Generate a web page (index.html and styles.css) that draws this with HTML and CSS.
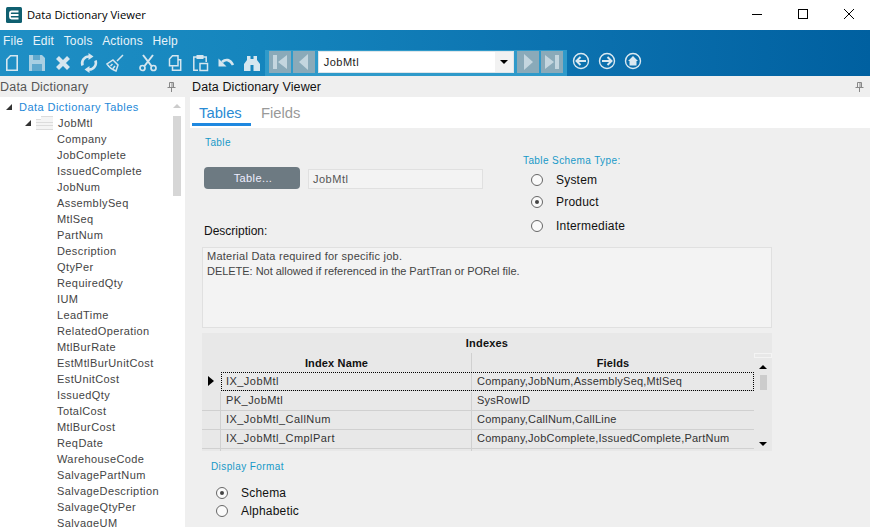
FILE: index.html
```html
<!DOCTYPE html>
<html lang="en">
<head>
<meta charset="utf-8">
<title>Data Dictionary Viewer</title>
<link rel="stylesheet" href="styles.css">
</head>
<body>
<div class="app">
  <header class="titlebar">
    <svg class="logo" width="16" height="16" viewBox="0 0 16 16"><rect width="16" height="16" rx="1.500" fill="#0f5f70"/><path d="M12.500 8H4V6a1.500 1.500 0 0 1 1.500-1.500h7M4 8v2a1.500 1.500 0 0 0 1.500 1.500h7" fill="none" stroke="#fff" stroke-width="1.800"/></svg>
    <span class="title">Data Dictionary Viewer</span>
    <div class="winctl">
      <svg width="46" height="20" viewBox="0 0 46 20"><path d="M18 10.500h10" stroke="#000"/></svg>
      <svg width="46" height="20" viewBox="0 0 46 20"><rect x="18.500" y="5.500" width="9" height="9" fill="none" stroke="#000"/></svg>
      <svg width="46" height="20" viewBox="0 0 46 20"><path d="M18 5l10 10M28 5L18 15" stroke="#000"/></svg>
    </div>
  </header>
  <div class="ribbon">
    <nav class="menu"><span>File</span><span>Edit</span><span>Tools</span><span>Actions</span><span>Help</span></nav>
    <div class="toolbar">
      <div class="tools">
        <svg class="tool" viewBox="0 0 20 20"><path d="M8.500 2.800h6.700v14.400H4.800V6.500z" fill="none" stroke="currentColor" stroke-width="1.600"/></svg>
        <svg class="tool" viewBox="0 0 20 20"><path d="M2 2h13l3 3v13H2z" fill="#a9cfe2"/><path d="M6 2h7v5H6zM5 11h10v7H5z" fill="#5fa8cd"/></svg>
        <svg class="tool" viewBox="0 0 20 20"><path d="M4.500 4.500l11 11M15.500 4.500l-11 11" stroke="currentColor" stroke-width="4.200"/></svg>
        <svg class="tool" viewBox="0 0 20 20"><path d="M3.500 12.500a6.800 6.800 0 0 1 6.500-9M16.500 7.500a6.800 6.800 0 0 1-6.500 9" fill="none" stroke="currentColor" stroke-width="2.600"/><path d="M9.500 0l5 3.500-5 3.500zM10.500 20l-5-3.500 5-3.500z" fill="currentColor"/></svg>
        <svg class="tool" viewBox="0 0 20 20"><path d="M18 2l-6 6M8 7l5 5-2 6c-3-1-7-4-9-7zM5.500 13l2-2M8 15.500l2-2.500" fill="none" stroke="currentColor" stroke-width="1.500"/></svg>
        <span class="tool-gap"></span>
        <svg class="tool" viewBox="0 0 20 20"><circle cx="4.500" cy="15" r="2.500" fill="none" stroke="currentColor" stroke-width="1.700"/><circle cx="15.500" cy="15" r="2.500" fill="none" stroke="currentColor" stroke-width="1.700"/><path d="M6.500 13L15 2M13.500 13L5 2" stroke="currentColor" stroke-width="2"/></svg>
        <svg class="tool" viewBox="0 0 20 20"><path d="M8.500 2.800h5.500v10H5.500V6z" fill="none" stroke="currentColor" stroke-width="1.500"/><path d="M14 6.800h2.700v10.400H8.500v-4" fill="none" stroke="currentColor" stroke-width="1.500"/></svg>
        <svg class="tool" viewBox="0 0 20 20"><path d="M7 4H3.800v13.200H8M13 4h3.200v5" fill="none" stroke="currentColor" stroke-width="1.500"/><rect x="6.500" y="2" width="7" height="4" fill="currentColor"/><path d="M10 10.500h7.500v7H10z" fill="none" stroke="currentColor" stroke-width="1.500"/></svg>
        <svg class="tool" viewBox="0 0 20 20"><path d="M6 9c4-3.500 8-2.500 11 3" fill="none" stroke="currentColor" stroke-width="2.600"/><path d="M2.500 5.500v8h8z" fill="currentColor"/></svg>
        <svg class="tool" viewBox="0 0 20 20"><path d="M5 3h3.500v3h3V3H15v4l3 4v7h-6.500v-6h-3v6H2v-7l3-4z" fill="currentColor"/></svg>
      </div>
      <div class="navgroup">
        <button class="navbtn"><svg width="16" height="16" viewBox="0 0 16 16"><path d="M1 1h4v14H1zM15 1v14L6 8z" fill="#c4d6df"/></svg></button>
        <button class="navbtn"><svg width="16" height="16" viewBox="0 0 16 16"><path d="M12 0v16L3 8z" fill="#c4d6df"/></svg></button>
        <div class="combo"><span class="combo-text">JobMtl</span><span class="combo-arrow"><i></i></span></div>
        <button class="navbtn"><svg width="16" height="16" viewBox="0 0 16 16"><path d="M4 0v16l9-8z" fill="#c4d6df"/></svg></button>
        <button class="navbtn"><svg width="16" height="16" viewBox="0 0 16 16"><path d="M11 1h4v14h-4zM1 1v14l9-7z" fill="#c4d6df"/></svg></button>
      </div>
      <div class="circles">
        <svg class="circle" viewBox="0 0 18 18"><circle cx="9" cy="9" r="7.500" fill="none" stroke="currentColor" stroke-width="1.400"/><path d="M14 9H5M8.500 5L4.500 9l4 4" fill="none" stroke="currentColor" stroke-width="2"/></svg>
        <svg class="circle" viewBox="0 0 18 18"><circle cx="9" cy="9" r="7.500" fill="none" stroke="currentColor" stroke-width="1.400"/><path d="M4 9h9M9.500 5l4 4-4 4" fill="none" stroke="currentColor" stroke-width="2"/></svg>
        <svg class="circle" viewBox="0 0 18 18"><circle cx="9" cy="9" r="7.500" fill="none" stroke="currentColor" stroke-width="1.400"/><path d="M9 4L4 9h1.500v4.500h7V9H14z" fill="currentColor"/></svg>
      </div>
    </div>
  </div>
  <main class="panes">
    <aside class="left">
      <div class="panehead"><span class="lefttitle">Data Dictionary</span><svg class="pin" width="9" height="10" viewBox="0 0 9 10"><path d="M2.500 .5h4v5h-4zM.5 5.500h8M4.500 5.500V10M5 1v4" fill="none" stroke="#888"/></svg></div>
      <div class="treewrap">
        <ul class="tree">
          <li class="root"><i class="exp"></i><span>Data Dictionary Tables</span></li>
          <li class="table"><i class="exp"></i><svg class="folder" width="17" height="14" viewBox="0 0 17 14"><path d="M0 3h5V0h12v14H0z" fill="#f4f4f4"/><path d="M5 .5h12M0 3.500h5M0 6.500h17M0 9.500h17M0 13.500h17" stroke="#dcdcdc"/></svg><span>JobMtl</span></li>
          <li>Company</li><li>JobComplete</li><li>IssuedComplete</li><li>JobNum</li><li>AssemblySeq</li><li>MtlSeq</li><li>PartNum</li><li>Description</li><li>QtyPer</li><li>RequiredQty</li><li>IUM</li><li>LeadTime</li><li>RelatedOperation</li><li>MtlBurRate</li><li>EstMtlBurUnitCost</li><li>EstUnitCost</li><li>IssuedQty</li><li>TotalCost</li><li>MtlBurCost</li><li>ReqDate</li><li>WarehouseCode</li><li>SalvagePartNum</li><li>SalvageDescription</li><li>SalvageQtyPer</li><li>SalvageUM</li>
        </ul>
        <div class="treescroll"><i class="scrollup"></i><i class="treethumb"></i></div>
      </div>
    </aside>
    <section class="right">
      <div class="panehead righthead"><span class="righttitle">Data Dictionary Viewer</span><svg class="pin" width="9" height="10" viewBox="0 0 9 10"><path d="M2.500 .5h4v5h-4zM.5 5.500h8M4.500 5.500V10M5 1v4" fill="none" stroke="#888"/></svg></div>
      <div class="tabs"><span class="tab active">Tables</span><span class="tab">Fields</span></div>
      <div class="content">
        <div class="top">
          <div class="topleft">
            <div class="grouplabel tablelabel">Table</div>
            <div class="tablerow"><button class="tablebtn">Table...</button><div class="textbox">JobMtl</div></div>
            <div class="desclabel">Description:</div>
          </div>
          <div class="schema">
            <div class="grouplabel">Table Schema Type:</div>
            <label class="radio r1"><i class="dot"></i>System</label>
            <label class="radio r2"><i class="dot on"></i>Product</label>
            <label class="radio r3"><i class="dot"></i>Intermediate</label>
          </div>
        </div>
        <div class="descbox"><div>Material Data required for specific job.</div><div class="tight">DELETE: Not allowed if referenced in the PartTran or PORel file.</div></div>
        <div class="grid">
          <div class="gridmain">
            <div class="gridtitle">Indexes</div>
            <div class="row headrow"><span class="rh"></span><span class="c1">Index Name</span><span class="c2">Fields</span></div>
            <div class="row selected"><span class="rh"><i class="cur"></i></span><span class="c1">IX_JobMtl</span><span class="c2">Company,JobNum,AssemblySeq,MtlSeq</span></div>
            <div class="row"><span class="rh"></span><span class="c1">PK_JobMtl</span><span class="c2">SysRowID</span></div>
            <div class="row"><span class="rh"></span><span class="c1">IX_JobMtl_CallNum</span><span class="c2">Company,CallNum,CallLine</span></div>
            <div class="row"><span class="rh"></span><span class="c1">IX_JobMtl_CmplPart</span><span class="c2">Company,JobComplete,IssuedComplete,PartNum</span></div>
            <div class="row"><span class="rh"></span><span class="c1"></span><span class="c2"></span></div>
          </div>
          <div class="gridscroll"><i class="corner"></i><i class="up"></i><i class="thumb"></i><i class="down"></i></div>
        </div>
        <div class="grouplabel displaylabel">Display Format</div>
        <label class="radio d1"><i class="dot on"></i>Schema</label>
        <label class="radio d2"><i class="dot"></i>Alphabetic</label>
      </div>
    </section>
  </main>
</div>
</body>
</html>
```
FILE: styles.css
```css
* { box-sizing: border-box; }
html, body { margin: 0; height: 100%; overflow: hidden; }
body { font-family: "Liberation Sans", Arial, sans-serif; font-size: 11px; color: #333; background: #efefef; }
.app { width: 870px; height: 527px; display: flex; flex-direction: column; overflow: hidden; }

.titlebar { height: 30px; background: #fff; display: flex; align-items: center; padding: 0 0 1px 6px; flex: none; }
.title { margin-left: 5px; font-family: "Open Sans", sans-serif; font-size: 11.2px; color: #000; }
.winctl { display: flex; margin: 0 -2px 2px auto; }
.winctl svg { display: block; }

.ribbon { height: 46px; flex: none; background: linear-gradient(90deg, #1f8fc5 0%, #1585bd 30%, #0a6fad 70%, #0060a0 100%); color: #fff; display: flex; flex-direction: column; }
.menu { height: 20px; display: flex; align-items: center; gap: 9.5px; padding: 2px 0 0 3px; font-size: 12px; letter-spacing: .2px; color: #e8f3f9; }
.toolbar { height: 26px; display: flex; align-items: stretch; }
.tools { width: 265px; display: flex; align-items: center; color: #d5e6ef; }
.tool { width: 20px; height: 20px; margin: 0 3px; flex: none; }
.tool:first-child { margin-left: 2px; margin-right: 2px; }
.tool-gap { width: 7px; flex: none; }
.navgroup { width: 302px; background: #2f9aca; display: flex; align-items: center; gap: 2px; padding: 0 4px 2px; }
.navbtn { width: 22px; height: 22px; padding: 0; border: 0; background: #8aaab9; display: flex; align-items: center; justify-content: center; }
.combo { width: 198px; height: 22px; background: #fff; border: 1px solid #dfe6ea; display: flex; margin: 0 1px; }
.combo-text { flex: 1; padding-left: 5px; line-height: 20px; font-size: 11px; letter-spacing: .5px; color: #222; }
.combo-arrow { width: 18px; background: #f2f2f2; display: flex; align-items: center; justify-content: center; }
.combo-arrow i { border: 4px solid transparent; border-top: 4px solid #000; border-bottom: 0; }
.circles { display: flex; gap: 8px; padding-left: 5px; padding-top: 2px; color: #dbe9f1; }
.circle { width: 18px; height: 18px; }

.panes { flex: 1; display: flex; gap: 5px; min-height: 0; }
.left { width: 185px; display: flex; flex-direction: column; flex: none; }
.panehead { height: 21px; background: #efefef; display: flex; align-items: center; justify-content: space-between; flex: none; }
.lefttitle { font-size: 12.5px; color: #555; letter-spacing: .2px; }
.left .pin { margin-right: 9px; }
.right .pin { margin-right: 6px; }
.righthead { padding-left: 2px; }
.righttitle { font-size: 12.5px; color: #111; letter-spacing: .1px; }
.treewrap { flex: 1; background: #fff; display: flex; min-height: 0; overflow: hidden; }
.tree { list-style: none; margin: 0; padding: 2px 0 0; flex: 1; letter-spacing: .4px; }
.tree li { height: 16px; line-height: 16px; padding-left: 57px; color: #444; white-space: nowrap; display: flex; align-items: center; }
.tree li.root { padding-left: 6px; color: #1e88d8; letter-spacing: .45px; }
.tree li.table { padding-left: 25px; }
.exp { width: 0; height: 0; border-style: solid; border-width: 0 0 6px 6px; border-color: transparent transparent #333 transparent; flex: none; margin-right: 7px; }
.tree li.table .exp { margin-right: 5px; }
.folder { margin: -1px 5px 0 0; flex: none; }
.treescroll { width: 17px; flex: none; display: flex; flex-direction: column; align-items: center; padding-top: 7px; background: #fff; }
.scrollup { width: 0; height: 0; border: 4px solid transparent; border-bottom: 4px solid #ccc; border-top: 0; }
.treethumb { width: 8px; height: 80px; background: #d6d6d6; margin-top: 8px; }

.right { flex: 1; display: flex; flex-direction: column; min-width: 0; }
.tabs { height: 31px; background: #fff; display: flex; flex: none; padding-left: 2px; }
.tab { font-size: 14.8px; color: #999; padding: 8px 9px 0; height: 29px; margin-right: 1px; }
.tab.active { color: #2a8bd4; border-bottom: 3px solid #1e88e0; width: 59px; padding-left: 7px; }
.content { flex: 1; background: #efefef; padding-left: 12px; min-height: 0; overflow: hidden; }
.top { height: 119px; display: flex; }
.topleft { width: 321px; flex: none; }
.grouplabel { font-size: 10px; color: #1799c8; letter-spacing: .4px; }
.tablelabel { margin: 9px 0 0 3px; line-height: 12px; }
.tablerow { display: flex; align-items: flex-end; gap: 8px; margin: 18px 0 0 2px; }
.tablebtn { width: 96px; height: 22px; background: #6d7a82; color: #eef; border: 0; border-radius: 4px; font: 11px "Liberation Sans", sans-serif; letter-spacing: .4px; padding: 0 0 0 2px; }
.textbox { width: 175px; height: 20px; background: #f3f3f3; border: 1px solid #e0e0e0; color: #555; padding-left: 4px; line-height: 18px; letter-spacing: .5px; }
.desclabel { font-size: 12px; color: #111; margin: 35px 0 0 2px; line-height: 14px; }
.schema { padding-top: 27px; }
.schema .grouplabel { line-height: 12px; }
.radio { display: flex; align-items: center; font-size: 12px; letter-spacing: .2px; color: #111; height: 16px; }
.dot { width: 12px; height: 12px; border: 1px solid #666; border-radius: 50%; background: #fafafa; margin: 0 13px 0 8px; position: relative; flex: none; }
.dot.on::after { content: ""; position: absolute; left: 3px; top: 3px; width: 4px; height: 4px; border-radius: 50%; background: #444; }
.r1 { margin-top: 5px; }
.r2 { margin-top: 6px; }
.r3 { margin-top: 8px; }
.descbox { width: 570px; height: 81px; background: #f3f3f3; border: 1px solid #e0e0e0; padding: 1px 4px; line-height: 15px; letter-spacing: .25px; color: #444; }
.tight { letter-spacing: -.03px; }
.grid { width: 570px; height: 118px; margin-top: 5px; background: #e8e8e8; display: flex; overflow: hidden; }
.gridmain { width: 552px; flex: none; }
.gridtitle { height: 20px; line-height: 20px; text-align: center; font-weight: bold; color: #111; padding-left: 18px; letter-spacing: .2px; }
.row { display: flex; height: 19px; line-height: 16px; border-bottom: 1px solid #d0d0d0; letter-spacing: .45px; }
.rh { width: 19px; flex: none; border-right: 1px solid #d0d0d0; display: flex; align-items: center; padding-left: 6px; }
.c1 { width: 251px; padding-left: 5px; border-right: 1px solid #d0d0d0; flex: none; }
.c2 { flex: 1; padding-left: 5px; letter-spacing: .22px; }
.headrow { height: 19px; border-bottom: 0; font-weight: bold; color: #111; letter-spacing: .15px; text-align: center; line-height: 20px; }
.headrow .rh { border-right: 0; }
.headrow .c1 { padding: 0 19px 0 0; }
.headrow .c2 { padding-left: 0; letter-spacing: .15px; }
.selected { outline: 1px dotted #000; outline-offset: -1px; margin: 0 0 1px 19px; line-height: 18px; }
.selected .rh { margin-left: -19px; border-right: 0; }
.cur { width: 0; height: 0; border-style: solid; border-width: 5px 0 5px 6px; border-color: transparent transparent transparent #000; }
.gridscroll { flex: 1; display: flex; flex-direction: column; align-items: center; padding-top: 20px; }
.corner { width: 18px; height: 5px; border: 1px solid #f4f4f4; }
.gridscroll .up { width: 0; height: 0; border: 4px solid transparent; border-bottom: 4px solid #000; border-top: 0; margin-top: 7px; }
.gridscroll .thumb { width: 7px; height: 15px; background: #ccc; margin-top: 6px; }
.gridscroll .down { width: 0; height: 0; border: 4px solid transparent; border-top: 4px solid #000; border-bottom: 0; margin-top: 52px; }
.displaylabel { margin: 10px 0 0 9px; line-height: 12px; }
.d1 { margin-top: 12px; margin-left: 6px; }
.d2 { margin-top: 2px; margin-left: 6px; }
```
